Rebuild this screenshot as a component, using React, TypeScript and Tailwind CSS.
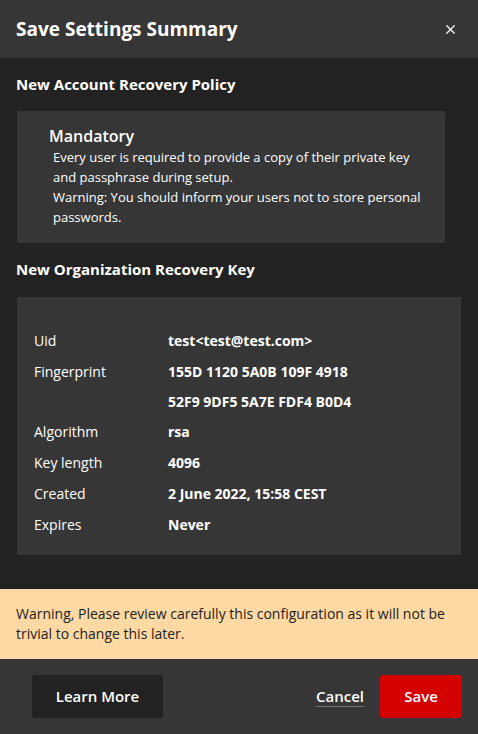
import { X } from "lucide-react";

const keyInfo = [
  { label: "Uid", value: "test<test@test.com>", h: "h-[31px]" },
  { label: "Fingerprint", value: "155D 1120 5A0B 109F 4918", h: "h-[30px]" },
  { label: "", value: "52F9 9DF5 5A7E FDF4 B0D4", h: "h-[30px]" },
  { label: "Algorithm", value: "rsa", h: "h-[31px]" },
  { label: "Key length", value: "4096", h: "h-[31px]" },
  { label: "Created", value: "2 June 2022, 15:58 CEST", h: "h-[31px]" },
  { label: "Expires", value: "Never", h: "h-[31px]" },
];

export default function App() {
  return (
    <div
      className="flex h-[734px] w-[478px] flex-col overflow-hidden bg-[#222222] text-white"
      style={{ fontFamily: '"Open Sans", sans-serif' }}
    >
      {/* Header */}
      <div className="flex h-[58px] shrink-0 items-center justify-between bg-[#363636] pl-4 pr-[20px]">
        <h1 className="text-[19px] font-bold leading-[28px]">
          Save Settings Summary
        </h1>
        <X className="h-[15px] w-[15px] text-white" strokeWidth={2} />
      </div>

      {/* Body */}
      <div className="flex min-h-0 flex-1 flex-col pb-[34px] pl-4 pr-[17px] pt-4">
        <h2 className="text-[15px] font-bold leading-[20px]">
          New Account Recovery Policy
        </h2>
        <div className="ml-px mt-[17px] w-[428px] rounded-[2px] bg-[#363636] pb-4 pl-8 pr-4 pt-[14px]">
          <div className="text-[16px] font-semibold leading-[22px]">
            Mandatory
          </div>
          <p className="ml-1 text-[13px] leading-[20px]">
            Every user is required to provide a copy of their private key and
            passphrase during setup.
            <br />
            Warning: You should inform your users not to store personal
            passwords.
          </p>
        </div>

        <h2 className="mt-4 text-[15px] font-bold leading-[20px]">
          New Organization Recovery Key
        </h2>
        <div className="ml-px mt-[18px] w-[444px] bg-[#363636] px-[17px] pb-[15px] pt-[28px]">
          {keyInfo.map((row, i) => (
            <div key={i} className={`flex ${row.h} items-center text-[14px]`}>
              <span className="w-[134px]">{row.label}</span>
              <span className="font-bold">{row.value}</span>
            </div>
          ))}
        </div>
      </div>

      {/* Warning */}
      <div className="h-[70px] shrink-0 bg-[#fed9a3] px-4 py-[15px] text-[14px] leading-[20px] text-[#222222]">
        Warning, Please review carefully this configuration as it will not be
        trivial to change this later.
      </div>

      {/* Footer */}
      <div className="flex h-[75px] shrink-0 items-start justify-between bg-[#363636] pl-8 pr-4 pt-4">
        <button className="h-[43px] w-[131px] rounded-[3px] bg-[#222222] text-[15px] font-semibold text-white">
          Learn More
        </button>
        <div className="flex items-center gap-4">
          <button className="border-b border-[#777777] text-[15px] font-semibold leading-[19px] text-white">
            Cancel
          </button>
          <button className="h-[43px] w-[82px] rounded-[3px] bg-[#d40101] text-[15px] font-semibold text-white">
            Save
          </button>
        </div>
      </div>
    </div>
  );
}
